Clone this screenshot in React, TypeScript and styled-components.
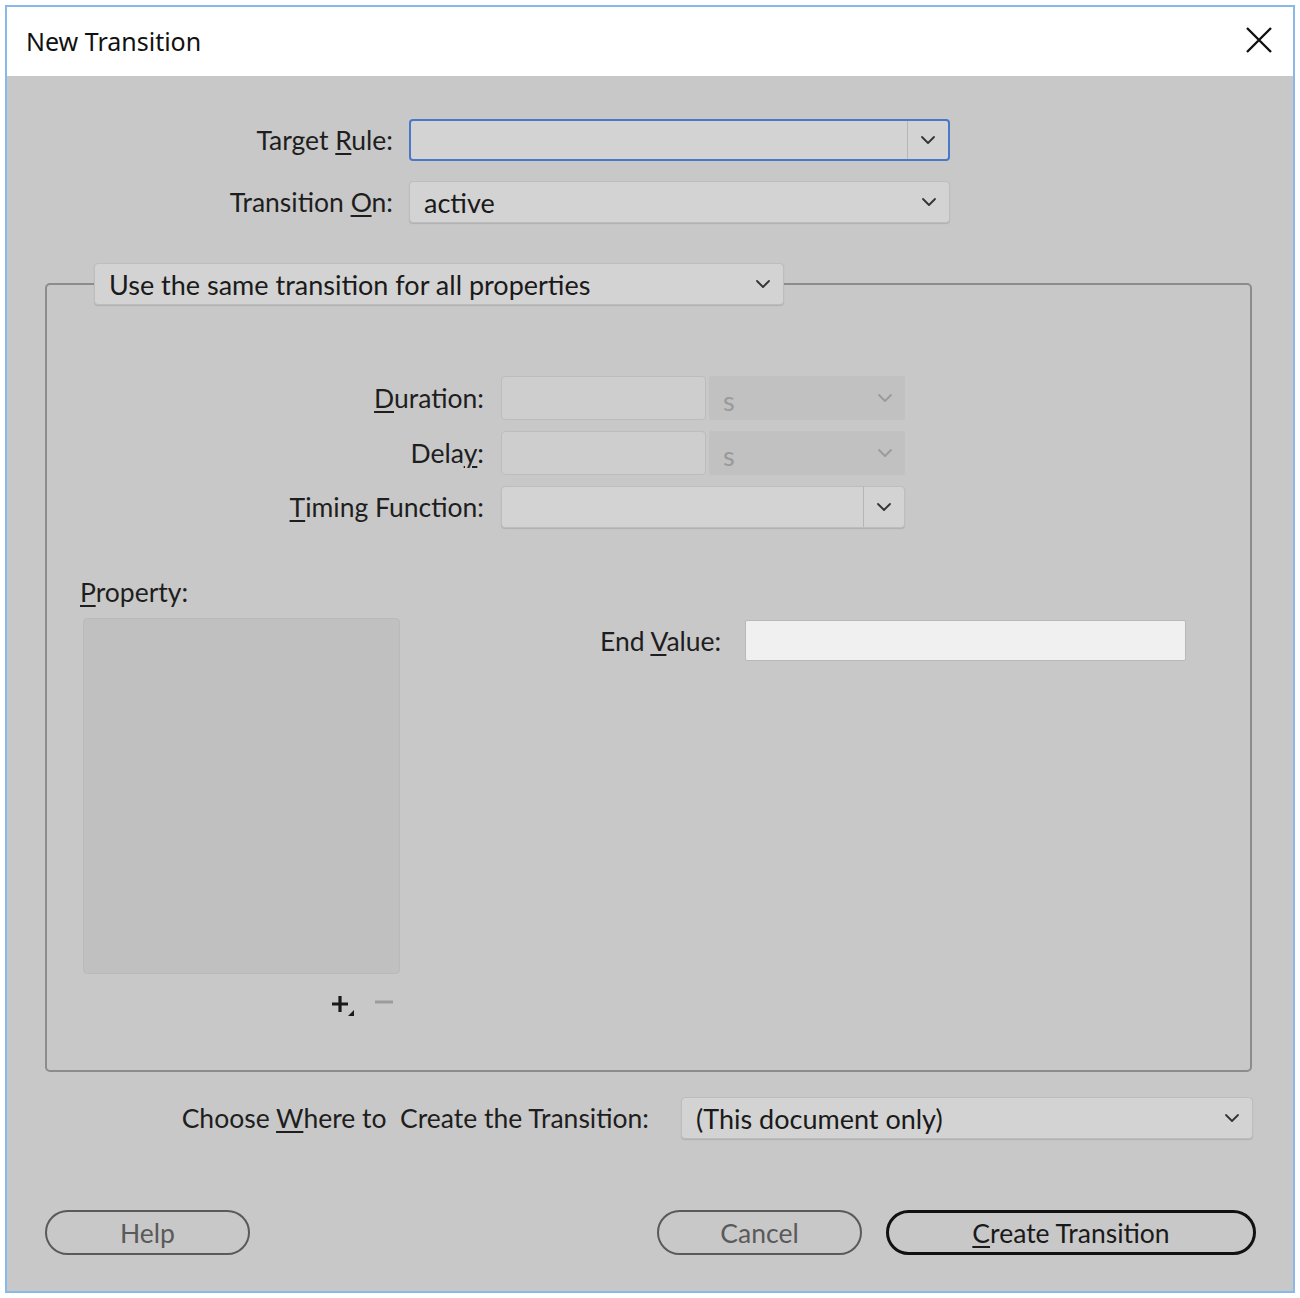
import styled, { createGlobalStyle } from "styled-components";

const GlobalStyle = createGlobalStyle`
  html, body {
    margin: 0;
    padding: 0;
    background: #ffffff;
  }
  body {
    font-family: Lato, "Liberation Sans", sans-serif;
    color: #1e1e1e;
  }
`;

const Chevron = ({ color = "#333" }: { color?: string }) => (
  <svg width="16" height="10" viewBox="0 0 16 10">
    <polyline
      points="2,2 8,8 14,2"
      fill="none"
      stroke={color}
      strokeWidth="1.8"
      strokeLinecap="round"
      strokeLinejoin="round"
    />
  </svg>
);

const App = () => {
  return (
    <>
      <GlobalStyle />
      <Window>
        <TitleBar>
          <Title>New Transition</Title>
          <CloseBtn>
            <svg width="28" height="28" viewBox="0 0 28 28">
              <path d="M2 2 L26 26 M26 2 L2 26" stroke="#111" strokeWidth="2.4" />
            </svg>
          </CloseBtn>
        </TitleBar>
        <Body>
          <TopForm>
            <Label>
              Target <u>R</u>ule:
            </Label>
            <Select $focused>
              <SelectText />
              <Arrow $divider>
                <Chevron />
              </Arrow>
            </Select>
            <Label>
              Transition <u>O</u>n:
            </Label>
            <Select>
              <SelectText>active</SelectText>
              <Arrow>
                <Chevron />
              </Arrow>
            </Select>
          </TopForm>

          <Group>
            <Legend>
              <Select>
                <SelectText>Use the same transition for all properties</SelectText>
                <Arrow>
                  <Chevron />
                </Arrow>
              </Select>
            </Legend>

            <TimingForm>
              <Label>
                <u>D</u>uration:
              </Label>
              <TextBox />
              <UnitSelect>
                <SelectText $muted>s</SelectText>
                <Arrow>
                  <Chevron color="#9a9a9a" />
                </Arrow>
              </UnitSelect>
              <Label>
                Dela<u>y</u>:
              </Label>
              <TextBox />
              <UnitSelect>
                <SelectText $muted>s</SelectText>
                <Arrow>
                  <Chevron color="#9a9a9a" />
                </Arrow>
              </UnitSelect>
              <Label>
                <u>T</u>iming Function:
              </Label>
              <WideSelect>
                <SelectText />
                <Arrow $divider>
                  <Chevron />
                </Arrow>
              </WideSelect>
            </TimingForm>

            <PropertyArea>
              <PropertyColumn>
                <PlainLabel>
                  <u>P</u>roperty:
                </PlainLabel>
                <ListBox />
                <ListTools>
                  <ToolIcon>
                    <svg width="26" height="24" viewBox="0 0 26 24">
                      <path d="M10 2 V18 M2 10 H18" stroke="#1a1a1a" strokeWidth="3.2" />
                      <path d="M18 22 L24 16 L24 22 Z" fill="#1a1a1a" />
                    </svg>
                  </ToolIcon>
                  <ToolIcon>
                    <svg width="20" height="20" viewBox="0 0 20 20">
                      <path d="M1 8 H19" stroke="#9c9c9c" strokeWidth="3" />
                    </svg>
                  </ToolIcon>
                </ListTools>
              </PropertyColumn>
              <EndValueRow>
                <PlainLabel>
                  End <u>V</u>alue:
                </PlainLabel>
                <ValueInput />
              </EndValueRow>
            </PropertyArea>
          </Group>

          <WhereRow>
            <Label>
              Choose <u>W</u>here to&nbsp; Create the Transition:
            </Label>
            <Select>
              <SelectText>(This document only)</SelectText>
              <Arrow>
                <Chevron />
              </Arrow>
            </Select>
          </WhereRow>

          <ButtonRow>
            <Button>Help</Button>
            <Spacer />
            <Button>Cancel</Button>
            <Button $primary>
              <u>C</u>reate Transition
            </Button>
          </ButtonRow>
        </Body>
      </Window>
    </>
  );
};

export default App;

const Window = styled.div`
  margin: 5px;
  width: 1290px;
  height: 1288px;
  box-sizing: border-box;
  border: 2px solid #88b9ea;
  display: flex;
  flex-direction: column;
  background: #c8c8c8;
`;

const TitleBar = styled.div`
  height: 69px;
  background: #ffffff;
  display: flex;
  align-items: center;
  justify-content: space-between;
  padding: 0 20px 0 19px;
  flex-shrink: 0;
`;

const Title = styled.div`
  font-family: "Noto Sans", "Liberation Sans", sans-serif;
  font-size: 25px;
  color: #111;
  margin-top: -2px;
`;

const CloseBtn = styled.div`
  display: flex;
  align-items: center;
  margin-top: -4px;
`;

const Body = styled.div`
  flex: 1;
  display: flex;
  flex-direction: column;
  padding: 43px 0 0;
  font-size: 26.5px;

  u {
    text-decoration-thickness: 2px;
    text-underline-offset: 3px;
  }
`;

const TopForm = styled.div`
  display: grid;
  grid-template-columns: 386px 541px;
  column-gap: 16px;
  row-gap: 20px;
  align-items: center;
`;

const Label = styled.div`
  text-align: right;
  white-space: nowrap;
  color: #1e1e1e;
`;

const PlainLabel = styled.div`
  white-space: nowrap;
  color: #1e1e1e;
`;

const Select = styled.div<{ $focused?: boolean }>`
  height: 42px;
  box-sizing: border-box;
  display: flex;
  align-items: center;
  background: #d3d3d3;
  border: ${(p) => (p.$focused ? "2px solid #4a78c8" : "1px solid #bdbdbd")};
  border-radius: 4px;
  box-shadow: ${(p) => (p.$focused ? "none" : "0 1px 1px rgba(0,0,0,0.12)")};
`;

const WideSelect = styled(Select)`
  grid-column: 2 / span 2;
`;

const UnitSelect = styled.div`
  height: 44px;
  box-sizing: border-box;
  display: flex;
  align-items: center;
  background: #c1c1c1;
  border-radius: 2px;
`;

const SelectText = styled.div<{ $muted?: boolean }>`
  flex: 1;
  padding-left: 14px;
  white-space: nowrap;
  font-size: 27px;
  color: ${(p) => (p.$muted ? "#9a9a9a" : "#1a1a1a")};
  padding-top: ${(p) => (p.$muted ? "4px" : "0")};
`;

const Arrow = styled.div<{ $divider?: boolean }>`
  width: 40px;
  align-self: stretch;
  display: flex;
  align-items: center;
  justify-content: center;
  border-left: ${(p) => (p.$divider ? "1px solid #b6b6b6" : "none")};
`;

const Group = styled.fieldset`
  margin: 40px 41px 0 38px;
  padding: 0 0 52px;
  border: 2px solid #8c8c8c;
  border-radius: 5px;
  min-width: 0;
`;

const Legend = styled.legend`
  margin-left: 47px;
  padding: 0;
  width: 690px;
`;

const TimingForm = styled.div`
  margin-top: 71px;
  display: grid;
  grid-template-columns: 451px 205px 196px;
  column-gap: 3px;
  row-gap: 11px;
  align-items: center;

  & > ${Label} {
    margin-right: 14px;
  }
`;

const TextBox = styled.div`
  height: 44px;
  box-sizing: border-box;
  background: #cecece;
  border: 1px solid #bcbcbc;
  border-radius: 4px;
`;

const PropertyArea = styled.div`
  margin-top: 48px;
  display: flex;
  align-items: flex-start;
  padding-left: 33px;
`;

const PropertyColumn = styled.div`
  width: 320px;
  display: flex;
  flex-direction: column;
`;

const ListBox = styled.div`
  margin: 10px 0 0 3px;
  height: 354px;
  background: #c0c0c0;
  border: 1px solid #bababa;
  border-radius: 4px;
`;

const ListTools = styled.div`
  display: flex;
  justify-content: flex-end;
  gap: 18px;
  padding: 20px 6px 0 0;
`;

const ToolIcon = styled.div`
  display: flex;
  align-items: flex-start;
`;

const EndValueRow = styled.div`
  margin: 44px 0 0 200px;
  display: grid;
  grid-template-columns: 124px 441px;
  column-gap: 21px;
  align-items: center;
`;

const ValueInput = styled.div`
  height: 41px;
  box-sizing: border-box;
  background: #f0f0f0;
  border: 1px solid #b8b8b8;
  border-radius: 2px;
`;

const WhereRow = styled.div`
  margin: 25px 40px 0 0;
  display: grid;
  grid-template-columns: 642px 1fr;
  column-gap: 32px;
  align-items: center;
`;

const ButtonRow = styled.div`
  margin: 71px 37px 0 38px;
  display: flex;
  align-items: center;
  gap: 24px;
`;

const Spacer = styled.div`
  flex: 1;
`;

const Button = styled.div<{ $primary?: boolean }>`
  width: ${(p) => (p.$primary ? "370px" : "205px")};
  height: 45px;
  box-sizing: border-box;
  border: ${(p) => (p.$primary ? "3px solid #111" : "2px solid #5a5a5a")};
  border-radius: 23px;
  display: flex;
  align-items: center;
  justify-content: center;
  color: ${(p) => (p.$primary ? "#1a1a1a" : "#5a5a5a")};
  font-size: 26.5px;
`;
